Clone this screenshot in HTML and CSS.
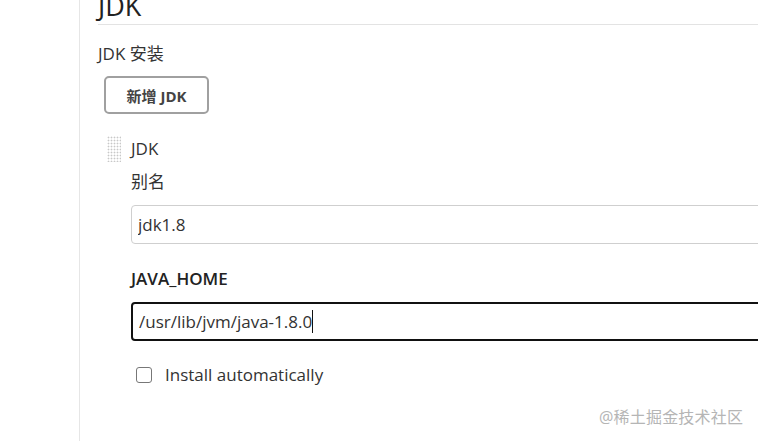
FILE: index.html
```html
<!DOCTYPE html>
<html lang="zh">
<head>
<meta charset="utf-8">
<link rel="stylesheet" href="styles.css">
</head>
<body>
<div class="page">
  <aside class="sidebar"></aside>
  <main class="main">
    <h1 class="section-title">JDK</h1>
    <div class="group-label">JDK 安装</div>
    <button class="add-btn" type="button">新增 JDK</button>
    <div class="repeated">
      <div class="handle"></div>
      <div class="repeated-body">
        <div class="item-title">JDK</div>
        <label class="field-label">别名</label>
        <input class="text-input" type="text" value="jdk1.8">
        <label class="field-label strong">JAVA_HOME</label>
        <div class="text-input focused"><span>/usr/lib/jvm/java-1.8.0</span><span class="caret"></span></div>
        <label class="check-row"><span class="checkbox"></span><span class="check-text">Install automatically</span></label>
      </div>
    </div>
    <div class="watermark">@稀土掘金技术社区</div>
  </main>
</div>
</body>
</html>
```

FILE: styles.css
```css
* { box-sizing: border-box; }
html, body { margin: 0; padding: 0; background: #fff; overflow: hidden; }
body {
  font-family: "Open Sans", "Noto Sans CJK SC", sans-serif;
  color: #333;
  width: 758px;
  height: 441px;
}
.page { display: flex; height: 441px; }
.sidebar { width: 80px; flex: none; border-right: 1px solid #e6e6e6; }
.main { flex: 1; padding-left: 18px; position: relative; min-width: 0; }
.section-title {
  margin: -12px 0 0 0;
  font-size: 27px;
  font-weight: 400;
  line-height: 36px;
  color: #222;
  border-bottom: 1px solid #e3e3e3;
}
.group-label { font-size: 17px; line-height: 22px; margin-top: 18px; color: #333; }
.add-btn {
  display: block;
  margin: 11px 0 0 6px;
  width: 105px;
  height: 38px;
  border: 2px solid #a0a0a0;
  border-radius: 5px;
  background: #fff;
  font-family: "Open Sans", "Noto Sans CJK SC", sans-serif;
  font-size: 15px;
  font-weight: 700;
  color: #444;
  padding: 0;
}
.repeated { display: flex; margin-top: 22px; margin-left: 9px; }
.handle {
  width: 14px;
  height: 26px;
  flex: none;
  background-image: radial-gradient(circle, #c8c8c8 0.8px, transparent 1.1px);
  background-size: 3px 3px;
  margin-right: 10px;
}
.repeated-body { flex: 1; }
.item-title { font-size: 17px; line-height: 22px; margin-top: 2px; color: #333; }
.field-label { display: block; font-size: 17px; line-height: 22px; margin-top: 11px; color: #333; }
.field-label.strong { font-weight: 600; margin-top: 24px; color: #222; }
.text-input {
  display: flex;
  align-items: center;
  width: 700px;
  height: 39px;
  margin-top: 12px;
  border: 1px solid #cfcfcf;
  border-radius: 4px;
  padding: 0 6px;
  font-family: "Open Sans", "Noto Sans CJK SC", sans-serif;
  font-size: 17px;
  color: #333;
  background: #fff;
}
.text-input.focused { border: 2px solid #111; padding: 0 6px; margin-top: 12px; }
.caret { display: inline-block; width: 1px; height: 23px; background: #111; margin-left: 0; }
.check-row { display: flex; align-items: center; margin-top: 23px; margin-left: 5px; }
.checkbox {
  width: 16px; height: 16px;
  border: 1.5px solid #777;
  border-radius: 3px;
  background: #fff;
  margin-right: 13px;
}
.check-text { font-size: 17px; font-weight: 500; color: #333; line-height: 22px; }
.watermark {
  position: absolute;
  left: 519px;
  top: 404px;
  font-size: 16px;
  color: #b5b5b5;
  letter-spacing: 0.2px;
}
```
